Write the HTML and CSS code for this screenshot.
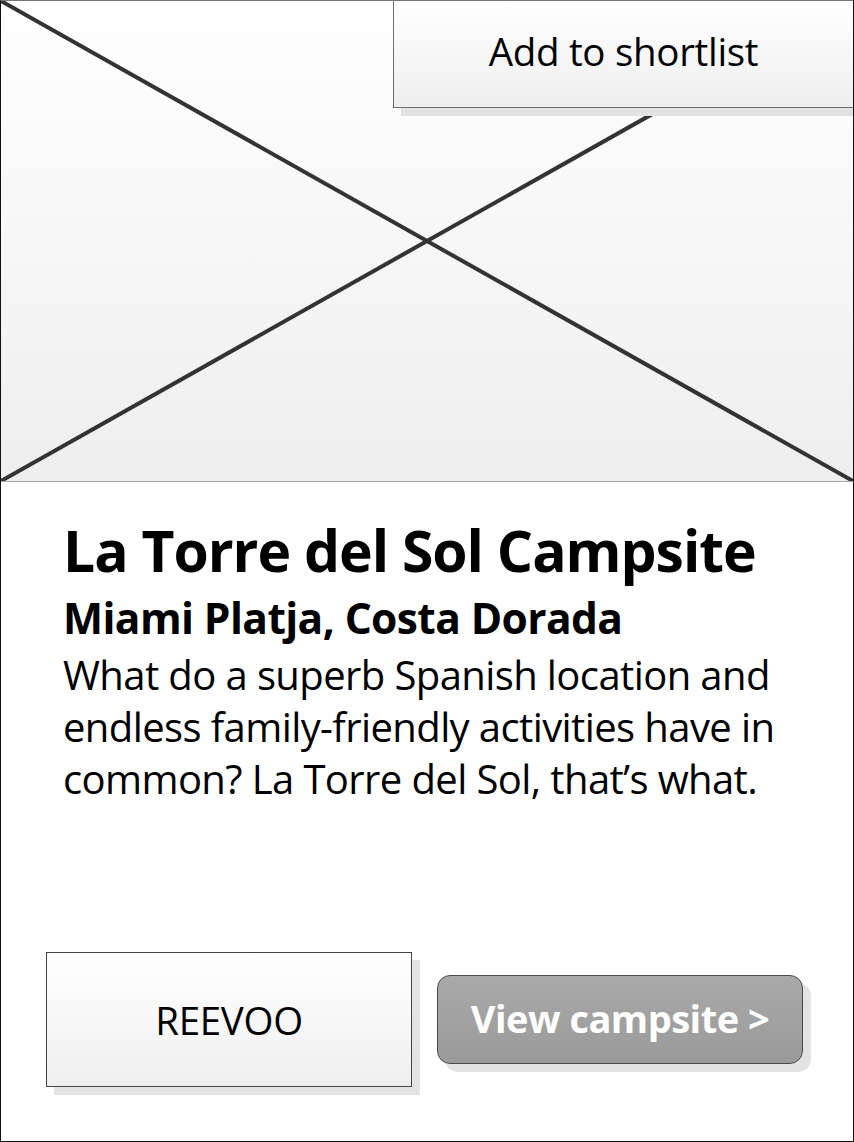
FILE: index.html
```html
<!DOCTYPE html>
<html lang="en">
<head>
<meta charset="utf-8">
<title>La Torre del Sol Campsite</title>
<link rel="stylesheet" href="styles.css">
</head>
<body>
<div class="card">
  <div class="hero">
    <svg class="placeholder" viewBox="0 0 852 480" preserveAspectRatio="none" aria-hidden="true">
      <line x1="0" y1="0" x2="852" y2="480" />
      <line x1="0" y1="480" x2="852" y2="0" />
    </svg>
    <button class="shortlist">Add to shortlist</button>
  </div>
  <div class="content">
    <h1 class="title">La Torre del Sol Campsite</h1>
    <h2 class="location">Miami Platja, Costa Dorada</h2>
    <p class="desc">What do a superb Spanish location and<br>endless family-friendly activities have in<br>common? La Torre del Sol, that’s what.</p>
  </div>
  <div class="actions">
    <div class="reevoo">REEVOO</div>
    <button class="view">View campsite &gt;</button>
  </div>
</div>
</body>
</html>
```
FILE: styles.css
```css
* { box-sizing: border-box; }
html, body { margin: 0; padding: 0; background: #fff; }
body { font-family: "Open Sans", "Noto Sans", sans-serif; color: #000; }

.card {
  width: 854px;
  height: 1142px;
  border: 1px solid #111;
  border-top-color: #777;
  display: flex;
  flex-direction: column;
  overflow: hidden;
}

.hero {
  position: relative;
  height: 481px;
  flex: none;
  background: linear-gradient(#ffffff, #eeeeee);
  border-bottom: 1px solid #a8a8a8;
}
.placeholder {
  position: absolute;
  inset: 0;
  width: 100%;
  height: 100%;
}
.placeholder line { stroke: #333; stroke-width: 4; }

.shortlist {
  position: absolute;
  top: -1px;
  right: -1px;
  width: 461px;
  height: 108px;
  border: 1px solid #6e6e6e;
  background: linear-gradient(#ffffff, #eeeeee);
  box-shadow: 8px 8px 0 #e2e2e2;
  font-family: inherit;
  font-size: 38.5px;
  letter-spacing: -0.3px;
  color: #000;
  padding: 0 0 6px 0;
}

.content { padding: 36px 62px 0; }
.title {
  margin: 0;
  font-size: 57px;
  font-weight: 700;
  line-height: 64px;
  letter-spacing: -1px;
}
.location {
  margin: 10px 0 0;
  font-size: 42.5px;
  font-weight: 700;
  line-height: 52px;
  letter-spacing: -0.6px;
}
.desc {
  margin: 5px 0 0;
  font-size: 40px;
  line-height: 52px;
  letter-spacing: -0.6px;
}

.actions {
  margin-top: auto;
  display: flex;
  align-items: center;
  gap: 25px;
  padding: 0 0 54px 45px;
}
.reevoo {
  width: 366px;
  height: 135px;
  border: 1px solid #444;
  background: linear-gradient(#ffffff, #efefef);
  box-shadow: 8px 8px 0 #e3e3e3;
  display: flex;
  align-items: center;
  justify-content: center;
  font-size: 38.5px;
  letter-spacing: -0.3px;
}
.view {
  width: 366px;
  height: 89px;
  border: 1px solid #4a4a4a;
  border-radius: 13px;
  background: linear-gradient(#a9a9a9, #9a9a9a);
  box-shadow: 8px 8px 0 #e3e3e3;
  color: #fff;
  font-family: inherit;
  font-size: 38px;
  font-weight: 700;
  letter-spacing: -0.5px;
  padding: 0 0 4px;
}
```
